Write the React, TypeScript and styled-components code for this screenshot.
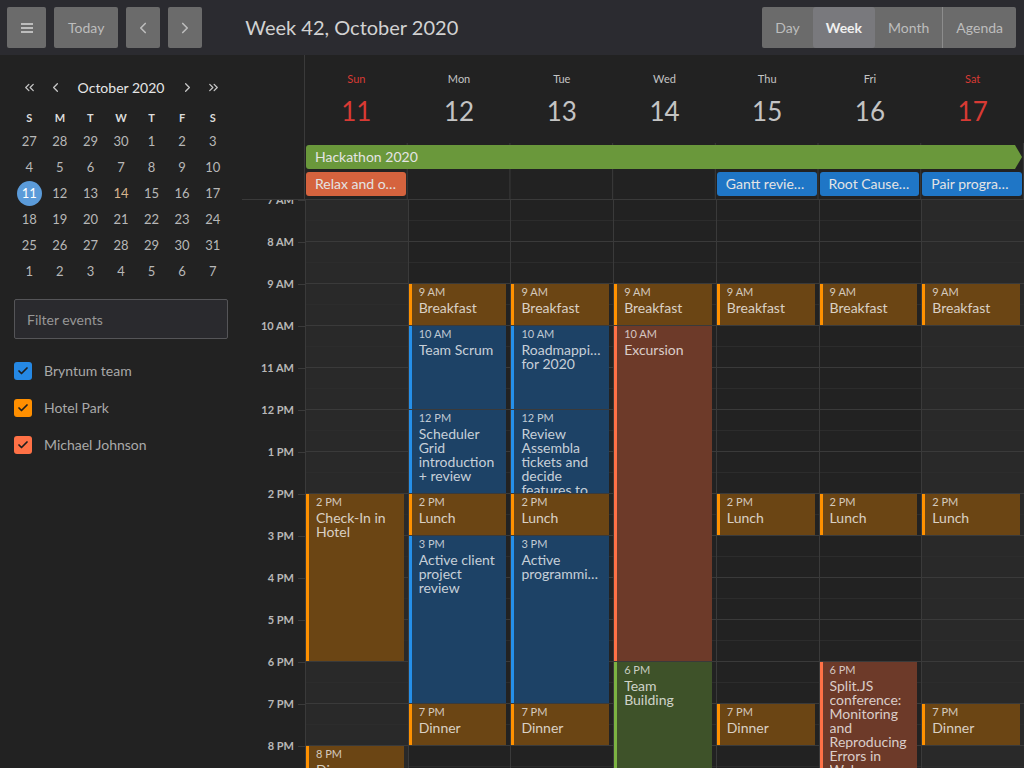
import React from "react";
import styled, { createGlobalStyle } from "styled-components";
import { ChevronLeft, ChevronRight, ChevronsLeft, ChevronsRight, Check } from "lucide-react";

const GlobalStyle = createGlobalStyle`
  html, body { margin: 0; padding: 0; background: #222222; }
  body { font-family: Lato, "Open Sans", "Liberation Sans", sans-serif; color: #cccccc; }
  * { box-sizing: border-box; }
`;

type Tone = "orange" | "blue" | "red" | "green";

const tones: Record<Tone, { bg: string; bar: string; solid: string }> = {
  orange: { bg: "#6b4514", bar: "#ff9100", solid: "#ff9100" },
  blue: { bg: "#1d4266", bar: "#2590ea", solid: "#1f76c6" },
  red: { bg: "#6d3a29", bar: "#ff7146", solid: "#d5633e" },
  green: { bg: "#3e5229", bar: "#7cb342", solid: "#6a983b" },
};

const HOUR = 42;
const START_HOUR = 7;
const HOURS = Array.from({ length: 15 }, (_, i) => START_HOUR + i);

const fmtHour = (h: number) => {
  const suffix = h >= 12 ? "PM" : "AM";
  const v = h % 12 === 0 ? 12 : h % 12;
  return `${v} ${suffix}`;
};

/* ---------- Toolbar ---------- */

const Shell = styled.div`
  width: 1024px;
  height: 768px;
  display: flex;
  flex-direction: column;
  overflow: hidden;
  background: #222222;
`;

const Toolbar = styled.header`
  height: 55px;
  flex: none;
  display: flex;
  align-items: center;
  gap: 8px;
  padding: 0 8px 0 7px;
  background: #2b2b30;
`;

const ToolButton = styled.button<{ $w?: number; $icon?: boolean }>`
  height: 41px;
  min-width: ${(p) => (p.$w ? `${p.$w}px` : "auto")};
  padding: ${(p) => (p.$icon ? "0" : "0 14px")};
  display: flex;
  align-items: center;
  justify-content: center;
  border: none;
  border-radius: 2px;
  background: #6b6b6b;
  color: #bdbdbd;
  font-family: inherit;
  font-size: 14px;
`;

const Title = styled.h1`
  margin: -1px 0 0 35px;
  font-size: 20px;
  font-weight: 400;
  color: #d2d2d2;
  flex: 1;
`;

const Segmented = styled.div`
  height: 41px;
  display: flex;
  background: #6b6b6b;
  border-radius: 2px;
  overflow: hidden;
`;

const SegButton = styled.button<{ $active?: boolean; $sep?: boolean }>`
  height: 100%;
  padding: 0 13px;
  border: none;
  border-left: ${(p) => (p.$sep ? "1px solid #8c8c8c" : "none")};
  background: ${(p) => (p.$active ? "#79797d" : "transparent")};
  border-radius: ${(p) => (p.$active ? "3px" : "0")};
  color: ${(p) => (p.$active ? "#f0f0f0" : "#bdbdbd")};
  font-weight: ${(p) => (p.$active ? 700 : 400)};
  font-family: inherit;
  font-size: 14px;
`;

const MenuIcon = () => (
  <svg width="12" height="10" viewBox="0 0 12 10">
    <rect x="0" y="0" width="12" height="2" fill="#bdbdbd" />
    <rect x="0" y="4" width="12" height="2" fill="#bdbdbd" />
    <rect x="0" y="8" width="12" height="2" fill="#bdbdbd" />
  </svg>
);

/* ---------- Sidebar ---------- */

const Body = styled.div`
  flex: 1;
  display: flex;
  min-height: 0;
`;

const Sidebar = styled.aside`
  width: 242px;
  flex: none;
  padding: 0 14px;
  background: #222222;
`;

const MiniHeader = styled.div`
  margin-top: 20px;
  height: 24px;
  display: flex;
  align-items: center;
`;

const NavIcon = styled.span<{ $w: number }>`
  width: ${(p) => p.$w}px;
  display: flex;
  justify-content: center;
  color: #c8c8c8;
`;

const MonthLabel = styled.div`
  flex: 1;
  text-align: center;
  font-size: 14px;
  color: #e6e6e6;
`;

const MiniGrid = styled.div`
  display: grid;
  grid-template-columns: repeat(7, 1fr);
  grid-auto-rows: 26px;
`;

const WeekLetters = styled.div`
  margin-top: 7px;
  height: 22px;
  display: grid;
  grid-template-columns: repeat(7, 1fr);
  align-items: center;
  justify-items: center;
  font-size: 11px;
  font-weight: 700;
  color: #dcdcdc;
`;

const DateCell = styled.div`
  display: flex;
  align-items: center;
  justify-content: center;
`;

const DateNum = styled.span<{ $selected?: boolean; $today?: boolean }>`
  width: 25px;
  height: 25px;
  border-radius: 50%;
  display: flex;
  align-items: center;
  justify-content: center;
  font-size: 13px;
  background: ${(p) => (p.$selected ? "#5b9bd9" : "transparent")};
  color: ${(p) => (p.$selected ? "#ffffff" : p.$today ? "#d8b48e" : "#b8b8b8")};
`;

const FilterInput = styled.input`
  display: block;
  width: 100%;
  height: 40px;
  margin-top: 15px;
  padding: 0 12px;
  background: #2a2a2e;
  border: 1px solid #555558;
  border-radius: 2px;
  color: #ddd;
  font-family: inherit;
  font-size: 14px;
  outline: none;
  &::placeholder {
    color: #979797;
  }
`;

const ResourceList = styled.ul`
  list-style: none;
  margin: 13px 0 0;
  padding: 0;
`;

const ResourceRow = styled.li`
  height: 37px;
  display: flex;
  align-items: center;
  gap: 12px;
  font-size: 14px;
  color: #a9a9a9;
`;

const CheckBox = styled.span<{ $color: string }>`
  width: 18px;
  height: 18px;
  border-radius: 3px;
  background: ${(p) => p.$color};
  display: flex;
  align-items: center;
  justify-content: center;
  color: #1e1e1e;
`;

/* ---------- Main calendar ---------- */

const Main = styled.main`
  flex: 1;
  min-width: 0;
  display: flex;
  flex-direction: column;
`;

const GridRow = styled.div`
  display: grid;
  grid-template-columns: 63px repeat(7, minmax(0, 1fr));
`;

const HeaderRow = styled(GridRow)`
  height: 88px;
  flex: none;
`;

const AxisCell = styled.div`
  border-right: 1px solid #3a3a3a;
`;

const DayHead = styled.div<{ $weekend?: boolean }>`
  display: flex;
  flex-direction: column;
  align-items: center;
  padding-top: 17px;
  color: ${(p) => (p.$weekend ? "#d83a34" : "#c4c4c4")};
`;

const DayName = styled.div`
  font-size: 11px;
  line-height: 14px;
`;

const DayNumber = styled.div`
  margin-top: 10px;
  font-size: 26px;
  line-height: 30px;
`;

const AllDayRow = styled(GridRow)`
  flex: none;
  border-bottom: 1px solid #3a3a3a;
`;

const AllDayGrid = styled.div`
  grid-column: 2 / -1;
  display: grid;
  grid-template-columns: repeat(7, minmax(0, 1fr));
  grid-template-rows: 24px 24px;
  row-gap: 3px;
  padding: 2px 0 3px;
  background-image: linear-gradient(
    to right,
    transparent calc(100% - 1px),
    #3a3a3a calc(100% - 1px)
  );
  background-size: calc(100% / 7) 100%;
`;

const AllDayEvent = styled.div<{ $tone: Tone; $arrow?: boolean }>`
  margin: 0 2px 0 1px;
  height: 24px;
  padding: 0 9px;
  border-radius: ${(p) => (p.$arrow ? "3px 0 0 3px" : "3px")};
  background: ${(p) => tones[p.$tone].solid};
  color: #e4e4e4;
  font-size: 14px;
  line-height: 24px;
  white-space: nowrap;
  overflow: hidden;
  text-overflow: ellipsis;
  clip-path: ${(p) =>
    p.$arrow
      ? "polygon(0 0, calc(100% - 7px) 0, 100% 50%, calc(100% - 7px) 100%, 0 100%)"
      : "none"};
`;

const Scroller = styled(GridRow)`
  flex: 1;
  min-height: 0;
  overflow: hidden;
  align-items: start;
`;

const Axis = styled.div`
  display: flex;
  flex-direction: column;
`;

const AxisSlot = styled.div`
  height: ${HOUR}px;
  display: flex;
  justify-content: flex-end;
  align-items: flex-start;
`;

const AxisLabel = styled.div`
  display: flex;
  align-items: center;
  gap: 4px;
  transform: translateY(-50%);
  font-size: 11px;
  font-weight: 700;
  line-height: 14px;
  color: #b8b8b8;
`;

const Tick = styled.span`
  width: 7px;
  height: 1px;
  background: #3a3a3a;
`;

const DayColumn = styled.div<{ $weekend?: boolean }>`
  position: relative;
  border-left: 1px solid #3a3a3a;
  background: ${(p) => (p.$weekend ? "#292929" : "#222222")};
`;

const HourSlot = styled.div`
  height: ${HOUR}px;
  border-bottom: 1px solid #3a3a3a;
  display: flex;
  flex-direction: column;
  &::before {
    content: "";
    height: 20px;
    border-bottom: 1px solid #2c2c2c;
  }
`;

const EventBox = styled.div<{ $tone: Tone }>`
  position: absolute;
  left: 0;
  right: 4px;
  padding: 1px 7px 0;
  background: ${(p) => tones[p.$tone].bg};
  border-left: 3px solid ${(p) => tones[p.$tone].bar};
  overflow: hidden;
`;

const EventTime = styled.div`
  font-size: 11px;
  line-height: 14px;
  color: rgba(255, 255, 255, 0.72);
`;

const EventName = styled.div`
  margin-top: 2px;
  font-size: 14px;
  line-height: 14px;
  color: rgba(255, 255, 255, 0.76);
  overflow: hidden;
  text-overflow: ellipsis;
`;

/* ---------- Data ---------- */

const days = [
  { name: "Sun", num: 11, weekend: true },
  { name: "Mon", num: 12 },
  { name: "Tue", num: 13 },
  { name: "Wed", num: 14 },
  { name: "Thu", num: 15 },
  { name: "Fri", num: 16 },
  { name: "Sat", num: 17, weekend: true },
];

type Ev = { day: number; start: number; end: number; name: string; tone: Tone };

const breakfast = [1, 2, 3, 4, 5, 6].map<Ev>((d) => ({ day: d, start: 9, end: 10, name: "Breakfast", tone: "orange" }));
const lunch = [1, 2, 4, 5, 6].map<Ev>((d) => ({ day: d, start: 14, end: 15, name: "Lunch", tone: "orange" }));
const dinner = [1, 2, 4, 6].map<Ev>((d) => ({ day: d, start: 19, end: 20, name: "Dinner", tone: "orange" }));

const events: Ev[] = [
  ...breakfast,
  ...lunch,
  ...dinner,
  { day: 0, start: 14, end: 18, name: "Check-In in Hotel", tone: "orange" },
  { day: 0, start: 20, end: 21, name: "Dinner", tone: "orange" },
  { day: 1, start: 10, end: 12, name: "Team Scrum", tone: "blue" },
  { day: 1, start: 12, end: 14, name: "Scheduler Grid introduction + review", tone: "blue" },
  { day: 1, start: 15, end: 19, name: "Active client project review", tone: "blue" },
  { day: 2, start: 10, end: 12, name: "Roadmapping for 2020", tone: "blue" },
  { day: 2, start: 12, end: 14, name: "Review Assembla tickets and decide features to release", tone: "blue" },
  { day: 2, start: 15, end: 19, name: "Active programming", tone: "blue" },
  { day: 3, start: 10, end: 18, name: "Excursion", tone: "red" },
  { day: 3, start: 18, end: 22, name: "Team Building", tone: "green" },
  { day: 5, start: 18, end: 22, name: "Split.JS conference: Monitoring and Reproducing Errors in Web Applications", tone: "red" },
];

const allDay: { col: number; row: number; span?: boolean; name: string; tone: Tone }[] = [
  { col: 1, row: 1, span: true, name: "Hackathon 2020", tone: "green" },
  { col: 1, row: 2, name: "Relax and official arrival beer", tone: "red" },
  { col: 5, row: 2, name: "Gantt review + release", tone: "blue" },
  { col: 6, row: 2, name: "Root Cause Analysis", tone: "blue" },
  { col: 7, row: 2, name: "Pair programming session", tone: "blue" },
];

const miniDates: { n: number; selected?: boolean; today?: boolean }[] = [
  27, 28, 29, 30, 1, 2, 3, 4, 5, 6, 7, 8, 9, 10, 11, 12, 13, 14, 15, 16, 17, 18, 19, 20, 21, 22, 23, 24, 25, 26, 27,
  28, 29, 30, 31, 1, 2, 3, 4, 5, 6, 7,
].map((n, i) => ({ n, selected: i === 14, today: i === 17 }));

const resources = [
  { name: "Bryntum team", color: "#2588e4" },
  { name: "Hotel Park", color: "#ff8f00" },
  { name: "Michael Johnson", color: "#ff7146" },
];

export default function App() {
  return (
    <>
      <GlobalStyle />
      <Shell>
        <Toolbar>
          <ToolButton $w={39} $icon>
            <MenuIcon />
          </ToolButton>
          <ToolButton $w={64}>Today</ToolButton>
          <ToolButton $w={34} $icon>
            <ChevronLeft size={18} strokeWidth={2.2} />
          </ToolButton>
          <ToolButton $w={34} $icon>
            <ChevronRight size={18} strokeWidth={2.2} />
          </ToolButton>
          <Title>Week 42, October 2020</Title>
          <Segmented>
            <SegButton>Day</SegButton>
            <SegButton $active>Week</SegButton>
            <SegButton>Month</SegButton>
            <SegButton $sep>Agenda</SegButton>
          </Segmented>
        </Toolbar>
        <Body>
          <Sidebar>
            <MiniHeader>
              <NavIcon $w={30}>
                <ChevronsLeft size={15} strokeWidth={2} />
              </NavIcon>
              <NavIcon $w={22}>
                <ChevronLeft size={15} strokeWidth={2} />
              </NavIcon>
              <MonthLabel>October 2020</MonthLabel>
              <NavIcon $w={22}>
                <ChevronRight size={15} strokeWidth={2} />
              </NavIcon>
              <NavIcon $w={30}>
                <ChevronsRight size={15} strokeWidth={2} />
              </NavIcon>
            </MiniHeader>
            <WeekLetters>
              {["S", "M", "T", "W", "T", "F", "S"].map((l, i) => (
                <span key={i}>{l}</span>
              ))}
            </WeekLetters>
            <MiniGrid>
              {miniDates.map((d, i) => (
                <DateCell key={i}>
                  <DateNum $selected={d.selected} $today={d.today}>
                    {d.n}
                  </DateNum>
                </DateCell>
              ))}
            </MiniGrid>
            <FilterInput placeholder="Filter events" />
            <ResourceList>
              {resources.map((r) => (
                <ResourceRow key={r.name}>
                  <CheckBox $color={r.color}>
                    <Check size={12} strokeWidth={3.5} />
                  </CheckBox>
                  {r.name}
                </ResourceRow>
              ))}
            </ResourceList>
          </Sidebar>
          <Main>
            <HeaderRow>
              <AxisCell />
              {days.map((d) => (
                <DayHead key={d.name} $weekend={d.weekend}>
                  <DayName>{d.name}</DayName>
                  <DayNumber>{d.num}</DayNumber>
                </DayHead>
              ))}
            </HeaderRow>
            <AllDayRow>
              <AxisCell />
              <AllDayGrid>
                {allDay.map((e) => (
                  <AllDayEvent
                    key={e.name}
                    $tone={e.tone}
                    $arrow={e.span}
                    style={{ gridColumn: e.span ? "1 / -1" : `${e.col}`, gridRow: `${e.row}` }}
                  >
                    {e.name}
                  </AllDayEvent>
                ))}
              </AllDayGrid>
            </AllDayRow>
            <Scroller>
              <Axis>
                {HOURS.map((h) => (
                  <AxisSlot key={h}>
                    <AxisLabel>
                      {fmtHour(h)}
                      <Tick />
                    </AxisLabel>
                  </AxisSlot>
                ))}
              </Axis>
              {days.map((d, di) => (
                <DayColumn key={d.name} $weekend={d.weekend}>
                  {HOURS.map((h) => (
                    <HourSlot key={h} />
                  ))}
                  {events
                    .filter((e) => e.day === di)
                    .map((e, i) => (
                      <EventBox
                        key={i}
                        $tone={e.tone}
                        style={{
                          top: (e.start - START_HOUR) * HOUR,
                          height: (e.end - e.start) * HOUR - 1,
                        }}
                      >
                        <EventTime>{fmtHour(e.start)}</EventTime>
                        <EventName>{e.name}</EventName>
                      </EventBox>
                    ))}
                </DayColumn>
              ))}
            </Scroller>
          </Main>
        </Body>
      </Shell>
    </>
  );
}
